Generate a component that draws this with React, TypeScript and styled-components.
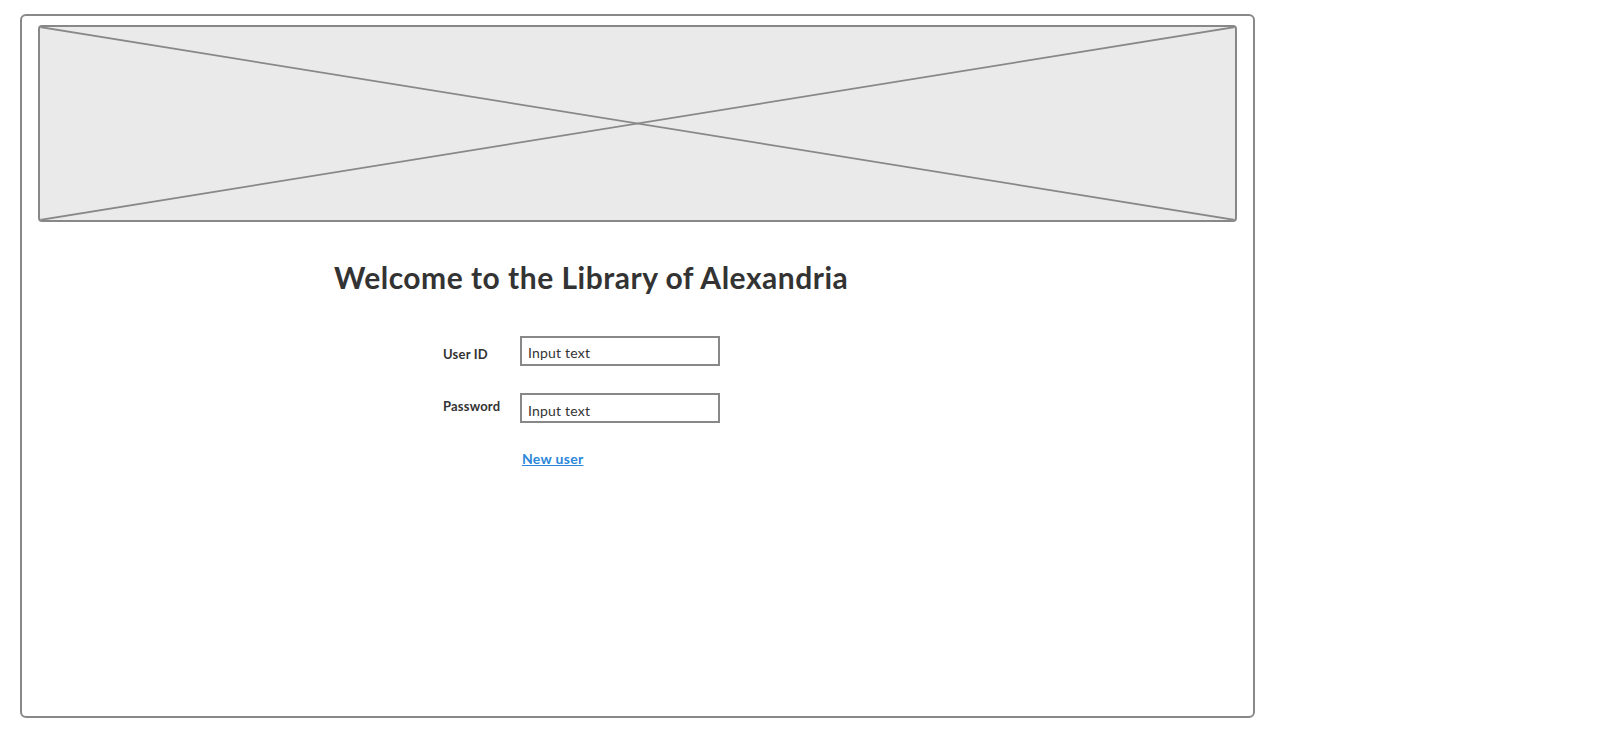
import React from 'react'
import styled, { createGlobalStyle } from "styled-components";

const GlobalStyle = createGlobalStyle`
    body {
        margin: 0;
        background: #ffffff;
        font-family: Lato, "Liberation Sans", sans-serif;
        color: #333333;
    }
`;

const App = () => {
    return (
    <>
        <GlobalStyle />
        <FrameStyled>
            <ImagePlaceholder>
                <svg width="100%" height="100%" preserveAspectRatio="none" viewBox="0 0 100 100">
                    <line x1="0" y1="0" x2="100" y2="100" stroke="#888888" strokeWidth="1.8" vectorEffect="non-scaling-stroke"/>
                    <line x1="100" y1="0" x2="0" y2="100" stroke="#888888" strokeWidth="1.8" vectorEffect="non-scaling-stroke"/>
                </svg>
            </ImagePlaceholder>
            <Title>Welcome to the Library of Alexandria</Title>
            <LoginForm>
                <FormRow>
                    <FieldLabel htmlFor="user-id" $offset={10}>User ID</FieldLabel>
                    <TextInput id="user-id" type="text" defaultValue="Input text" readOnly $shift={3} />
                </FormRow>
                <FormRow>
                    <FieldLabel htmlFor="password" $offset={5}>Password</FieldLabel>
                    <TextInput id="password" type="text" defaultValue="Input text" readOnly $shift={4} />
                </FormRow>
                <LinkRow>
                    <NewUserLink href="#">New user</NewUserLink>
                </LinkRow>
            </LoginForm>
        </FrameStyled>
    </>
    )
}

const FrameStyled = styled.main`
    box-sizing: border-box;
    width: 1235px;
    height: 704px;
    margin: 14px 0 0 20px;
    border: 2px solid #888888;
    border-radius: 6px;
    display: flex;
    flex-direction: column;
`;

const ImagePlaceholder = styled.div`
    box-sizing: border-box;
    height: 197px;
    margin: 9px 16px 0 16px;
    border: 2px solid #888888;
    border-radius: 4px;
    background: #eaeaea;
    overflow: hidden;

    svg {
        display: block;
    }
`;

const Title = styled.h1`
    margin: 37px 0 0 312px;
    font-size: 30px;
    line-height: 36px;
    letter-spacing: 0.5px;
    font-weight: 700;
    color: #333333;
`;

const LoginForm = styled.form`
    margin: 41px 0 0 421px;
    display: flex;
    flex-direction: column;
    gap: 27px;
`;

const FormRow = styled.div`
    display: flex;
    align-items: flex-start;
`;

const LinkRow = styled.div`
    margin-top: -2px;
    padding-left: 79px;
`;

const FieldLabel = styled.label<{ $offset: number }>`
    width: 77px;
    padding-top: ${p => p.$offset}px;
    font-size: 13px;
    line-height: 16px;
    letter-spacing: 0.2px;
    font-weight: 700;
    color: #333333;
`;

const TextInput = styled.input<{ $shift?: number }>`
    box-sizing: border-box;
    width: 200px;
    height: 30px;
    margin: 0;
    padding: ${p => p.$shift ?? 0}px 6px 0 6px;
    border: 2px solid #888888;
    border-radius: 0;
    background: #ffffff;
    font-family: Lato, "Liberation Sans", sans-serif;
    font-size: 14px;
    letter-spacing: 0.2px;
    color: #333333;
    outline: none;
`;

const NewUserLink = styled.a`
    font-size: 14px;
    line-height: 16px;
    letter-spacing: 0.3px;
    font-weight: 700;
    color: #2b87da;
    text-decoration: underline;
`;

export default App;
